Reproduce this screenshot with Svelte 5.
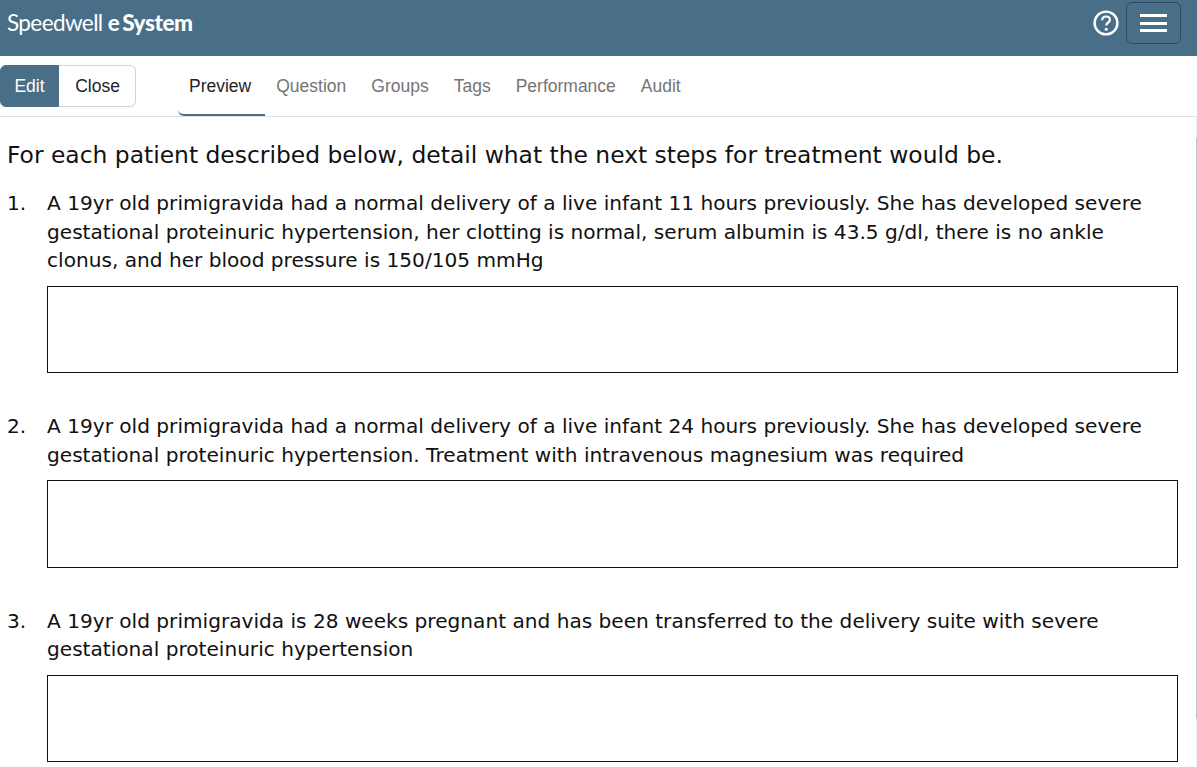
<script lang="ts">
  const tabs = ['Preview', 'Question', 'Groups', 'Tags', 'Performance', 'Audit'];
  let active = $state('Preview');

  const questions = [
    'A 19yr old primigravida had a normal delivery of a live infant 11 hours previously. She has developed severe gestational proteinuric hypertension, her clotting is normal, serum albumin is 43.5 g/dl, there is no ankle clonus, and her blood pressure is 150/105 mmHg',
    'A 19yr old primigravida had a normal delivery of a live infant 24 hours previously. She has developed severe gestational proteinuric hypertension. Treatment with intravenous magnesium was required',
    'A 19yr old primigravida is 28 weeks pregnant and has been transferred to the delivery suite with severe gestational proteinuric hypertension'
  ];
</script>

<div class="page">
  <header class="topbar">
    <div class="brand">Speedwell <span class="e">e</span><b>System</b></div>
    <div class="top-actions">
      <svg class="help" viewBox="0 0 26 26" width="26" height="26" aria-label="Help">
        <circle cx="13" cy="13" r="11.4" fill="none" stroke="#fff" stroke-width="2.4" />
        <path d="M9.2 10.2c0-2.3 1.7-3.7 3.9-3.7 2.2 0 3.8 1.3 3.8 3.2 0 1.6-.9 2.4-2 3.1-1.1.7-1.6 1.2-1.6 2.4v.4" fill="none" stroke="#fff" stroke-width="2.2" />
        <circle cx="13.2" cy="19.2" r="1.5" fill="#fff" />
      </svg>
      <button type="button" class="burger" aria-label="Menu">
        <span></span><span></span><span></span>
      </button>
    </div>
  </header>

  <nav class="subbar">
    <div class="btn-group">
      <button type="button" class="btn btn-edit">Edit</button>
      <button type="button" class="btn btn-close">Close</button>
    </div>
    <ul class="tabs">
      {#each tabs as tab (tab)}
        <li>
          <button type="button" class="tab" class:active={active === tab} onclick={() => (active = tab)}>{tab}</button>
        </li>
      {/each}
    </ul>
  </nav>

  <main class="content">
    <p class="lead">For each patient described below, detail what the next steps for treatment would be.</p>
    <ol class="questions">
      {#each questions as text, index (index)}
        <li class="question">
          <span class="num">{index + 1}.</span>
          <div class="body">
            <p>{text}</p>
            <div class="answer"></div>
          </div>
        </li>
      {/each}
    </ol>
    <div class="scroll-track"><div class="scroll-thumb"></div></div>
  </main>
</div>

<style>
  :global(body) {
    margin: 0;
    background: #fff;
    overflow: hidden;
  }

  .page {
    height: 767px;
    overflow: hidden;
    font-family: "Liberation Sans", Arial, sans-serif;
  }

  .topbar {
    height: 56px;
    box-sizing: border-box;
    background: #486f87;
    display: flex;
    justify-content: space-between;
    padding: 2px 16px 12px 7px;
  }

  .brand {
    font-family: Lato, "Open Sans", sans-serif;
    font-size: 22.5px;
    line-height: 42px;
    letter-spacing: -0.6px;
    color: #fff;
  }

  .brand .e {
    font-weight: 700;
    margin-right: 3px;
  }

  .brand b {
    font-weight: 900;
    letter-spacing: -0.4px;
  }

  .top-actions {
    display: flex;
    align-items: center;
    gap: 7px;
  }

  .burger {
    width: 55px;
    height: 42px;
    padding: 0;
    background: transparent;
    border: 1px solid #2c4a60;
    border-radius: 6px;
    display: flex;
    flex-direction: column;
    align-items: center;
    justify-content: center;
    gap: 4.5px;
  }

  .burger span {
    width: 27px;
    height: 3px;
    background: #fff;
  }

  .subbar {
    height: 61px;
    box-sizing: border-box;
    border-bottom: 1px solid #dee2e6;
    display: flex;
    align-items: flex-start;
    padding-top: 9px;
  }

  .btn-group {
    display: flex;
    height: 42px;
  }

  .btn {
    font: 17.5px "Liberation Sans", Arial, sans-serif;
    padding: 0;
    height: 42px;
    box-sizing: border-box;
  }

  .btn-edit {
    width: 59px;
    background: #486f87;
    color: #fff;
    border: 1px solid #486f87;
    border-radius: 6px 0 0 6px;
  }

  .btn-close {
    width: 77px;
    background: #fff;
    color: #212529;
    border: 1px solid #ced4da;
    border-left: none;
    border-radius: 0 6px 6px 0;
    padding-left: 1px;
  }

  .tabs {
    list-style: none;
    margin: 0 0 0 42px;
    padding: 0;
    display: flex;
    height: 51px;
  }

  .tab {
    font: 17.5px "Liberation Sans", Arial, sans-serif;
    height: 51px;
    padding: 0 14px 7px 11px;
    border: none;
    border-bottom: 2px solid transparent;
    background: none;
    color: #757575;
    border-radius: 0 0 0 6px;
  }

  .tab.active {
    color: #212529;
    border-bottom-color: #486f87;
  }

  .content {
    position: relative;
    height: 650px;
    box-sizing: border-box;
    padding: 22px 19px 0 7px;
    font-family: "DejaVu Sans", Verdana, sans-serif;
    color: #111;
  }

  .lead {
    margin: 0 0 18px;
    font-size: 23.4px;
    line-height: 32px;
  }

  .questions {
    list-style: none;
    margin: 0;
    padding: 0;
  }

  .question {
    display: flex;
    font-size: 20.13px;
    line-height: 28.6px;
    margin-bottom: 38.8px;
  }

  .num {
    width: 40px;
    flex: none;
  }

  .body {
    flex: 1;
    min-width: 0;
  }

  .body p {
    margin: 0 0 11px;
  }

  .answer {
    height: 87.5px;
    box-sizing: border-box;
    border: 1px solid #111;
  }

  /* scrollbar sliver down the right edge */
  .scroll-track {
    position: absolute;
    top: 0;
    right: 0;
    bottom: 0;
    width: 1px;
    background: #f1f1f1;
  }

  .scroll-thumb {
    height: 581px;
    margin-top: 21px;
    background: #c1c1c1;
  }
</style>
